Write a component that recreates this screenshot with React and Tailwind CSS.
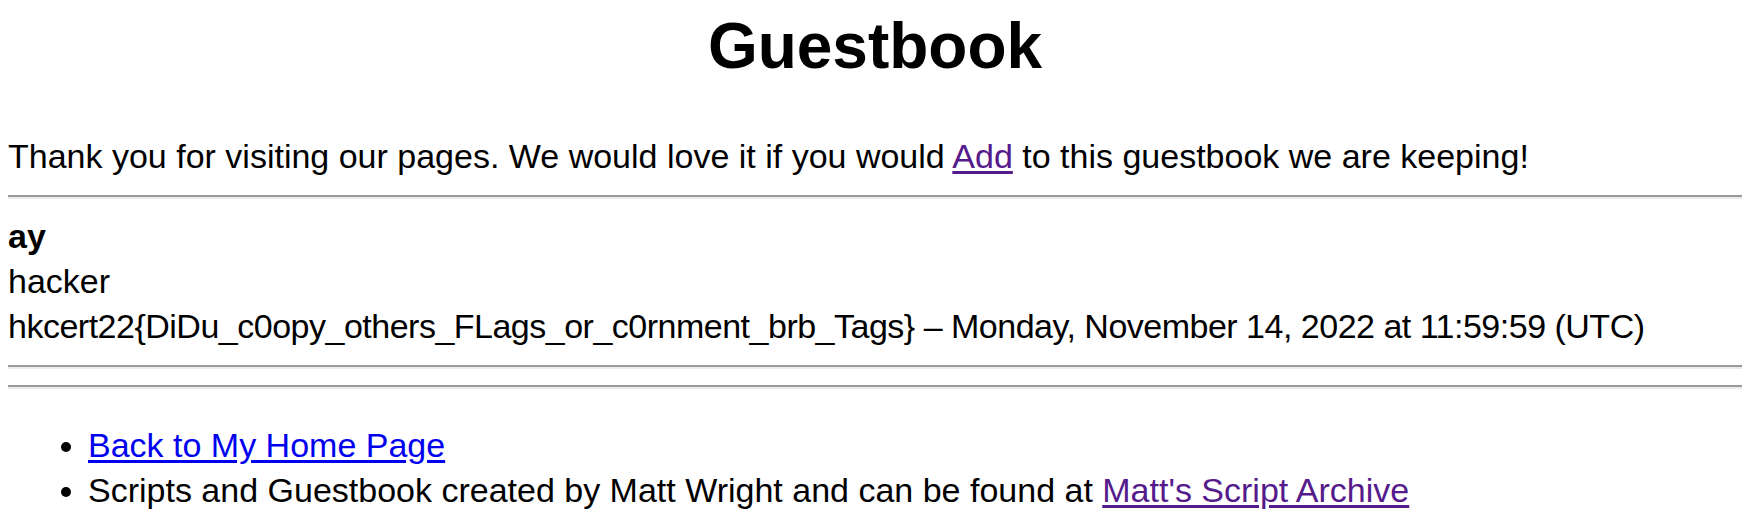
export default function App() {
  const Hr = () => (
    <div className="h-[4px] border-t-2 border-b-2 border-t-[#9a9a9a] border-b-[#ececec]" />
  );
  return (
    <div className="w-[1750px] h-[520px] bg-white text-black px-[8px] overflow-hidden font-['Liberation_Sans',Arial,sans-serif]">
      <h1 className="pt-[14px] text-center text-[64px] font-bold leading-[64px] h-[134px]">Guestbook</h1>
      <p className="text-[34px] leading-[45px]">
        Thank you for visiting our pages. We would love it if you would{" "}
        <a href="#" className="text-[#551a8b] underline underline-offset-[3px]">Add</a> to this guestbook we are keeping!
      </p>
      <div className="pt-[16px]">
        <Hr />
      </div>
      <div className="pt-[15px] text-[34px] leading-[45px]">
        <div className="font-bold">ay</div>
        <div>hacker</div>
        <div className="tracking-[-0.5px]">hkcert22{"{"}DiDu_c0opy_others_FLags_or_c0rnment_brb_Tags{"}"} – Monday, November 14, 2022 at 11:59:59 (UTC)</div>
      </div>
      <div className="pt-[16px]">
        <Hr />
      </div>
      <div className="pt-[16px]">
        <Hr />
      </div>
      <ul className="pt-[34px] pl-[80px] list-disc text-[34px] leading-[45px]">
        <li>
          <a href="#" className="text-[#0000ee] underline underline-offset-[3px]">Back to My Home Page</a>
        </li>
        <li>
          Scripts and Guestbook created by Matt Wright and can be found at{" "}
          <a href="#" className="text-[#551a8b] underline underline-offset-[3px]">Matt's Script Archive</a>
        </li>
      </ul>
    </div>
  );
}
